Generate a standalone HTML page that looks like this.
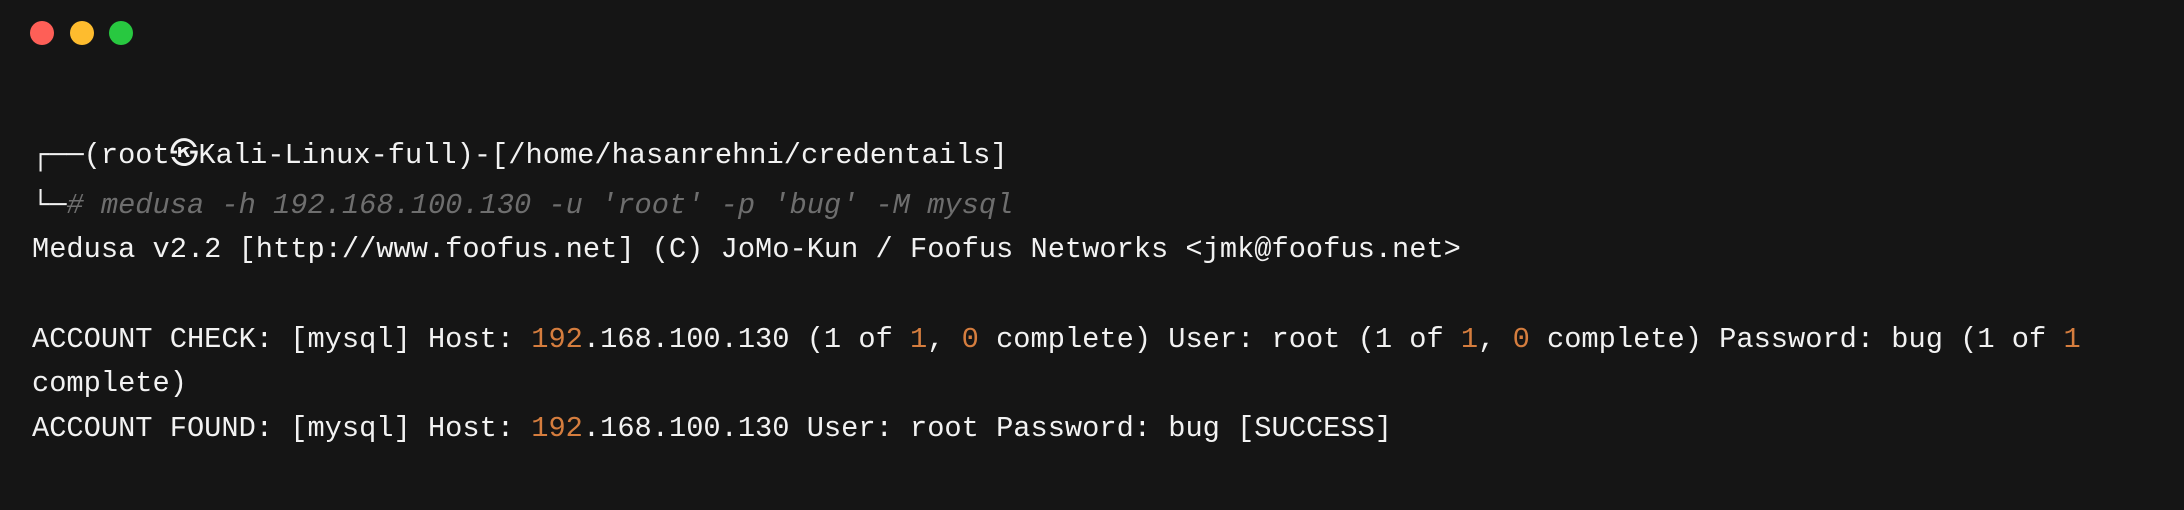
<!DOCTYPE html>
<html><head><meta charset="utf-8"><style>
html,body{margin:0;padding:0;}
body{width:2184px;height:510px;background:#151515;position:relative;overflow:hidden;font-family:"Liberation Mono","DejaVu Sans Mono",monospace;font-size:28.7px;color:#f2f2f2;}
.dot{position:absolute;top:21px;width:24px;height:24px;border-radius:50%;}
.l{position:absolute;left:32px;white-space:pre;line-height:44px;}
.o{color:#d57d3e;}
.c{color:#6e6e6e;font-style:italic;}
</style></head><body>
<div class="dot" style="left:30px;background:#fe5f57"></div>
<div class="dot" style="left:70px;background:#febc2e"></div>
<div class="dot" style="left:109px;background:#28c840"></div>
<div class="l" style="top:134px">┌──(root㉿Kali-Linux-full)-[/home/hasanrehni/credentails]</div>
<div class="l" style="top:184px"><span>└─</span><span class="c"># medusa -h 192.168.100.130 -u 'root' -p 'bug' -M mysql</span></div>
<div class="l" style="top:228px">Medusa v2.2 [http://www.foofus.net] (C) JoMo-Kun / Foofus Networks &lt;jmk@foofus.net&gt;</div>
<div class="l" style="top:318px">ACCOUNT CHECK: [mysql] Host: <span class="o">192</span>.168.100.130 (1 of <span class="o">1</span>, <span class="o">0</span> complete) User: root (1 of <span class="o">1</span>, <span class="o">0</span> complete) Password: bug (1 of <span class="o">1</span></div>
<div class="l" style="top:362px">complete)</div>
<div class="l" style="top:407px">ACCOUNT FOUND: [mysql] Host: <span class="o">192</span>.168.100.130 User: root Password: bug [SUCCESS]</div>
</body></html>
